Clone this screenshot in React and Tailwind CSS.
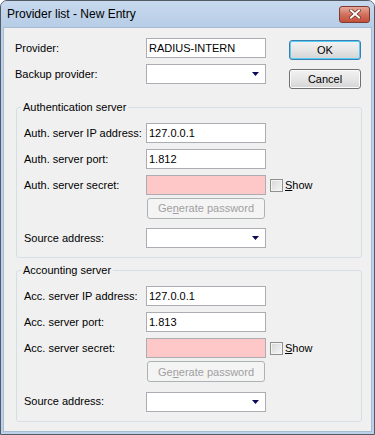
import React from 'react';

function TextBox({ value = '', pink = false }) {
  return (
    <input
      readOnly
      value={value}
      className={`w-[120px] h-[20px] border border-[#abadb3] px-[2px] text-[11px] text-black outline-none ${pink ? 'bg-[#ffc8c8]' : 'bg-white'}`}
    />
  );
}

function ComboBox() {
  return (
    <div className="w-[120px] h-[20px] border border-[#abadb3] bg-white flex items-center justify-end pr-[6px]">
      <svg width="7" height="4" viewBox="0 0 7 4">
        <path d="M0 0 H7 L3.5 4 Z" fill="#0b0b55" />
      </svg>
    </div>
  );
}

function Button({ children, isDefault = false }) {
  return (
    <button
      className={`w-[72px] h-[20px] rounded-[3px] border text-[11px] text-black bg-gradient-to-b from-[#f2f2f2] via-[#e6e6e6] to-[#d4d4d4] ${
        isDefault ? 'border-[#3c7fb1] shadow-[inset_0_0_0_1px_#56cdf3]' : 'border-[#707070] shadow-[inset_0_0_0_1px_#fcfcfc]'
      }`}
    >
      {children}
    </button>
  );
}

function Row({ label, children, width = 'w-[122px]' }) {
  return (
    <div className="flex items-center h-[20px]">
      <span className={`${width} text-[11px] text-black`}>{label}</span>
      {children}
    </div>
  );
}

function ServerGroup({ title, prefix, ip, port, extraTop }) {
  return (
    <fieldset className={`ml-[1px] w-[346px] border border-[#d5dfe5] rounded-[3px] pl-[7px] pt-[9px] pb-[9px] ${extraTop}`}>
      <legend className="-ml-[3px] px-[2px] text-[11px] leading-[14px] text-black">{title}</legend>
      <div className="flex flex-col gap-[6px]">
        <Row label={`${prefix} server IP address:`}>
          <TextBox value={ip} />
        </Row>
        <Row label={`${prefix} server port:`}>
          <TextBox value={port} />
        </Row>
        <Row label={`${prefix} server secret:`}>
          <TextBox pink />
          <span className="ml-[4px] w-[13px] h-[13px] border border-[#8f8f8f] bg-gradient-to-br from-[#d6d6d6] to-[#f7f7f7] shadow-[inset_0_0_0_1px_#f4f4f4]" />
          <span className="ml-[2px] text-[11px] text-black">
            <u>S</u>how
          </span>
        </Row>
      </div>
      <button
        disabled
        className="ml-[123px] mt-[3px] w-[118px] h-[21px] rounded-[3px] border border-[#adb2b5] bg-[#f4f4f4] text-[11px] text-[#a0a0a0]"
      >
        Ge<u>n</u>erate password
      </button>
      <div className="mt-[9px]">
        <Row label="Source address:">
          <ComboBox />
        </Row>
      </div>
    </fieldset>
  );
}

export default function App() {
  return (
    <div className="w-[375px] h-[435px] flex flex-col border border-[#545a63] rounded-t-[7px] bg-[#bcd1ea] overflow-hidden font-['Liberation_Sans',Arial,sans-serif]">
      <div className="h-[26px] flex items-center justify-between pl-[6px] pr-[4px] bg-gradient-to-b from-[#c7d9ee] to-[#b7cce6]">
        <span className="text-[12px] text-black">Provider list - New Entry</span>
        <div className="w-[31px] h-[17px] rounded-[3px] border border-[#7c3a30] bg-gradient-to-b from-[#e6a899] via-[#d2705d] to-[#c24f3a] flex items-center justify-center">
          <svg width="12" height="10" viewBox="0 0 12 10">
            <path d="M2 1.5 L10 8.5 M10 1.5 L2 8.5" stroke="#6b2a22" strokeWidth="3.4" strokeLinecap="square" />
            <path d="M2 1.5 L10 8.5 M10 1.5 L2 8.5" stroke="#ffffff" strokeWidth="2" strokeLinecap="square" />
          </svg>
        </div>
      </div>
      <div className="flex-1 flex px-[2px] pb-[2px]">
        <div className="flex-1 border border-[#a9bcd2] bg-[#f0f0f0] pt-[10px] pl-[11px]">
          <div className="flex">
            <div className="flex flex-col gap-[6px]">
              <Row label="Provider:" width="w-[131px]">
                <TextBox value="RADIUS-INTERN" />
              </Row>
              <Row label="Backup provider:" width="w-[131px]">
                <ComboBox />
              </Row>
            </div>
            <div className="ml-[23px] pt-[2px] flex flex-col gap-[9px]">
              <Button isDefault>OK</Button>
              <Button>Cancel</Button>
            </div>
          </div>
          <ServerGroup title="Authentication server" prefix="Auth." ip="127.0.0.1" port="1.812" extraTop="mt-[11px]" />
          <ServerGroup title="Accounting server" prefix="Acc." ip="127.0.0.1" port="1.813" extraTop="mt-[5px]" />
        </div>
      </div>
    </div>
  );
}
